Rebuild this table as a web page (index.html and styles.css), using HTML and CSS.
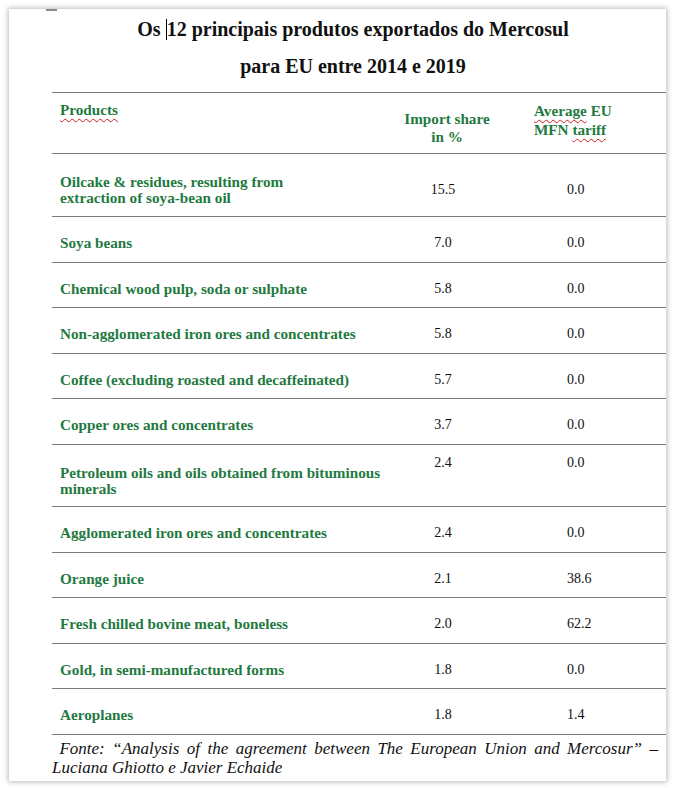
FILE: index.html
```html
<!DOCTYPE html>
<html lang="pt">
<head>
<meta charset="utf-8">
<title>Os 12 principais produtos exportados do Mercosul</title>
<link rel="stylesheet" href="styles.css">
</head>
<body>
<div class="page">
  <div class="mark"></div>
  <div class="title">
    <div class="tline">Os <span class="caret"></span>12 principais produtos exportados do Mercosul</div>
    <div class="tline">para EU entre 2014 e 2019</div>
  </div>
  <div class="table">
    <div class="row head">
      <div class="c1"><span class="sq">Products</span></div>
      <div class="c2 h2">Import share<br>in %</div>
      <div class="c3 h3"><span class="sq">Average</span> EU<br>MFN <span class="sq">tariff</span></div>
    </div>
    <div class="row double">
      <div class="c1">Oilcake &amp; residues, resulting from<br>extraction of soya-bean oil</div>
      <div class="c2">15.5</div>
      <div class="c3">0.0</div>
    </div>
    <div class="row"><div class="c1">Soya beans</div><div class="c2">7.0</div><div class="c3">0.0</div></div>
    <div class="row"><div class="c1">Chemical wood pulp, soda or sulphate</div><div class="c2">5.8</div><div class="c3">0.0</div></div>
    <div class="row"><div class="c1">Non-agglomerated iron ores and concentrates</div><div class="c2">5.8</div><div class="c3">0.0</div></div>
    <div class="row"><div class="c1">Coffee (excluding roasted and decaffeinated)</div><div class="c2">5.7</div><div class="c3">0.0</div></div>
    <div class="row"><div class="c1">Copper ores and concentrates</div><div class="c2">3.7</div><div class="c3">0.0</div></div>
    <div class="row double petro">
      <div class="c1">Petroleum oils and oils obtained from bituminous<br>minerals</div>
      <div class="c2 up">2.4</div>
      <div class="c3 up">0.0</div>
    </div>
    <div class="row"><div class="c1">Agglomerated iron ores and concentrates</div><div class="c2">2.4</div><div class="c3">0.0</div></div>
    <div class="row"><div class="c1">Orange juice</div><div class="c2">2.1</div><div class="c3">38.6</div></div>
    <div class="row"><div class="c1">Fresh chilled bovine meat, boneless</div><div class="c2">2.0</div><div class="c3">62.2</div></div>
    <div class="row"><div class="c1">Gold, in semi-manufactured forms</div><div class="c2">1.8</div><div class="c3">0.0</div></div>
    <div class="row"><div class="c1">Aeroplanes</div><div class="c2">1.8</div><div class="c3">1.4</div></div>
  </div>
  <p class="source">&nbsp;Fonte: “Analysis of the agreement between The European Union and Mercosur” – Luciana Ghiotto e Javier Echaide</p>
</div>
</body>
</html>
```
FILE: styles.css
```css
html, body {
  margin: 0;
  padding: 0;
  background: #ffffff;
}
body {
  padding: 9px 8px 7px 9px;
  font-family: "Liberation Serif", "Times New Roman", serif;
}
.page {
  width: 657px;
  height: 772px;
  background: #ffffff;
  box-shadow: 0 0 5px 1px rgba(0, 0, 0, 0.28);
  overflow: hidden;
}
.mark {
  width: 11px;
  height: 2px;
  margin-left: 37px;
  background: #8a8a8a;
}
.title {
  margin-left: 43px;
  width: 602px;
  text-align: center;
  font-weight: bold;
  font-size: 20px;
  color: #111;
}
.tline {
  line-height: 37px;
}
.caret {
  display: inline-block;
  width: 1px;
  height: 21px;
  background: #000;
  vertical-align: -4px;
}
.table {
  margin-top: 7px;
  margin-left: 43px;
  width: 614px;
  border-top: 1px solid #7c7c7c;
}
.row {
  display: grid;
  grid-template-columns: 342px 98px 1fr;
  align-items: center;
  box-sizing: border-box;
  height: 45.6px;
  padding-top: 18px;
  border-bottom: 1px solid #7c7c7c;
  align-content: start;
}
.row.double {
  height: 63px;
  padding-top: 20px;
}
.row.petro {
  height: 62px;
}
.c1 {
  padding-left: 8px;
  color: #1f7a3f;
  font-weight: bold;
  font-size: 15.2px;
  line-height: 16px;
}
.c2 {
  text-align: center;
  font-size: 14px;
  line-height: 16px;
  color: #111;
}
.c3 {
  padding-left: 75px;
  font-size: 14px;
  line-height: 16px;
  color: #111;
}
.up {
  align-self: start;
  margin-top: -10px;
}
.row.head {
  height: 61px;
  padding-top: 8px;
  align-items: start;
}
.head .c1 {
  line-height: 18px;
}
.h2, .h3 {
  color: #1f7a3f;
  font-weight: bold;
  font-size: 15.2px;
}
.h2 {
  padding-top: 9px;
  line-height: 18px;
  padding-left: 8px;
}
.h3 {
  padding-left: 42px;
  line-height: 19px;
}
.sq {
  text-decoration: underline wavy #d02020;
  text-decoration-thickness: 1px;
  text-underline-offset: 3px;
}
.source {
  margin: 4px 0 0 43px;
  width: 606px;
  font-style: italic;
  font-size: 17px;
  line-height: 19px;
  color: #111;
  text-align: justify;
}
```
